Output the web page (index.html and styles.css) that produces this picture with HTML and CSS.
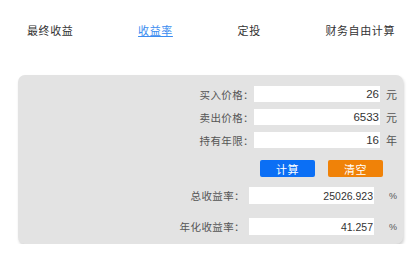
FILE: index.html
```html
<!DOCTYPE html>
<html lang="zh">
<head>
    <meta charset="UTF-8">
    <title>收益率</title>
    <link rel="stylesheet" href="styles.css">
</head>
<body>
    <div class="tabs">
        <a class="tab">最终收益</a>
        <a class="tab active">收益率</a>
        <a class="tab">定投</a>
        <a class="tab">财务自由计算</a>
    </div>

    <div class="panel">
        <div class="row">
            <label>买入价格：</label>
            <input type="text" value="26">
            <span class="unit">元</span>
        </div>
        <div class="row">
            <label>卖出价格：</label>
            <input type="text" value="6533">
            <span class="unit">元</span>
        </div>
        <div class="row">
            <label>持有年限：</label>
            <input type="text" value="16">
            <span class="unit">年</span>
        </div>
        <div class="actions">
            <button class="btn btn-calc">计算</button>
            <button class="btn btn-clear">清空</button>
        </div>
        <div class="row result">
            <label>总收益率：</label>
            <input type="text" value="25026.923" readonly>
            <span class="unit">%</span>
        </div>
        <div class="row result">
            <label>年化收益率：</label>
            <input type="text" value="41.257" readonly>
            <span class="unit">%</span>
        </div>
    </div>
</body>
</html>
```

FILE: styles.css
```css
body {
    margin: 0;
    background: #fff;
    font-family: "Liberation Sans", "Noto Sans CJK SC", sans-serif;
    font-size: 12px;
    color: #333;
}
.tabs {
    display: flex;
    justify-content: space-between;
    padding: 23px 24px 0 27px;
    height: 52px;
}
.tab {
    font-size: 11px;
    letter-spacing: 0.6px;
    line-height: 16px;
    height: 16px;
    color: #333;
}
.tab.active {
    color: #3b8cf0;
    text-decoration: underline;
}
.panel {
    margin: 0 16px 0 18px;
    background: #e3e3e3;
    border-radius: 7px;
    box-shadow: 1px 2px 3px rgba(0, 0, 0, 0.18);
    padding: 11px 8px 9px 0;
}
.row {
    display: flex;
    justify-content: flex-end;
    align-items: center;
    height: 16px;
    margin-bottom: 7px;
}
.row label {
    color: #555;
    font-size: 10.5px;
    letter-spacing: 0.4px;
    margin-right: 0;
}
.row input {
    width: 126px;
    height: 16px;
    box-sizing: border-box;
    border: none;
    padding: 0 1px 0 0;
    margin: 0;
    text-align: right;
    font-family: "Liberation Sans", sans-serif;
    font-size: 11.5px;
    color: #333;
    background: #fff;
    outline: none;
}
.unit {
    width: 9px;
    margin-left: 6px;
    font-size: 11px;
    color: #555;
}
.actions {
    display: flex;
    justify-content: flex-end;
    gap: 13px;
    margin: 12px 12px 10px 0;
}
.btn {
    width: 55px;
    height: 17px;
    border: none;
    border-radius: 2px;
    padding: 0;
    color: #fff;
    font-family: "Liberation Sans", "Noto Sans CJK SC", sans-serif;
    font-size: 11px;
    letter-spacing: 0.5px;
}
.btn-calc {
    background: #0b6ff5;
}
.btn-clear {
    background: #f08208;
}
.row.result {
    height: 17px;
    margin-bottom: 14px;
}
.row.result:last-child {
    margin-bottom: 0;
}
.row.result label {
    margin-right: 4px;
}
.row.result input {
    height: 17px;
    width: 125px;
    font-size: 10.5px;
}
.row.result .unit {
    font-size: 9px;
    margin-left: 15px;
    width: 6px;
}
```
